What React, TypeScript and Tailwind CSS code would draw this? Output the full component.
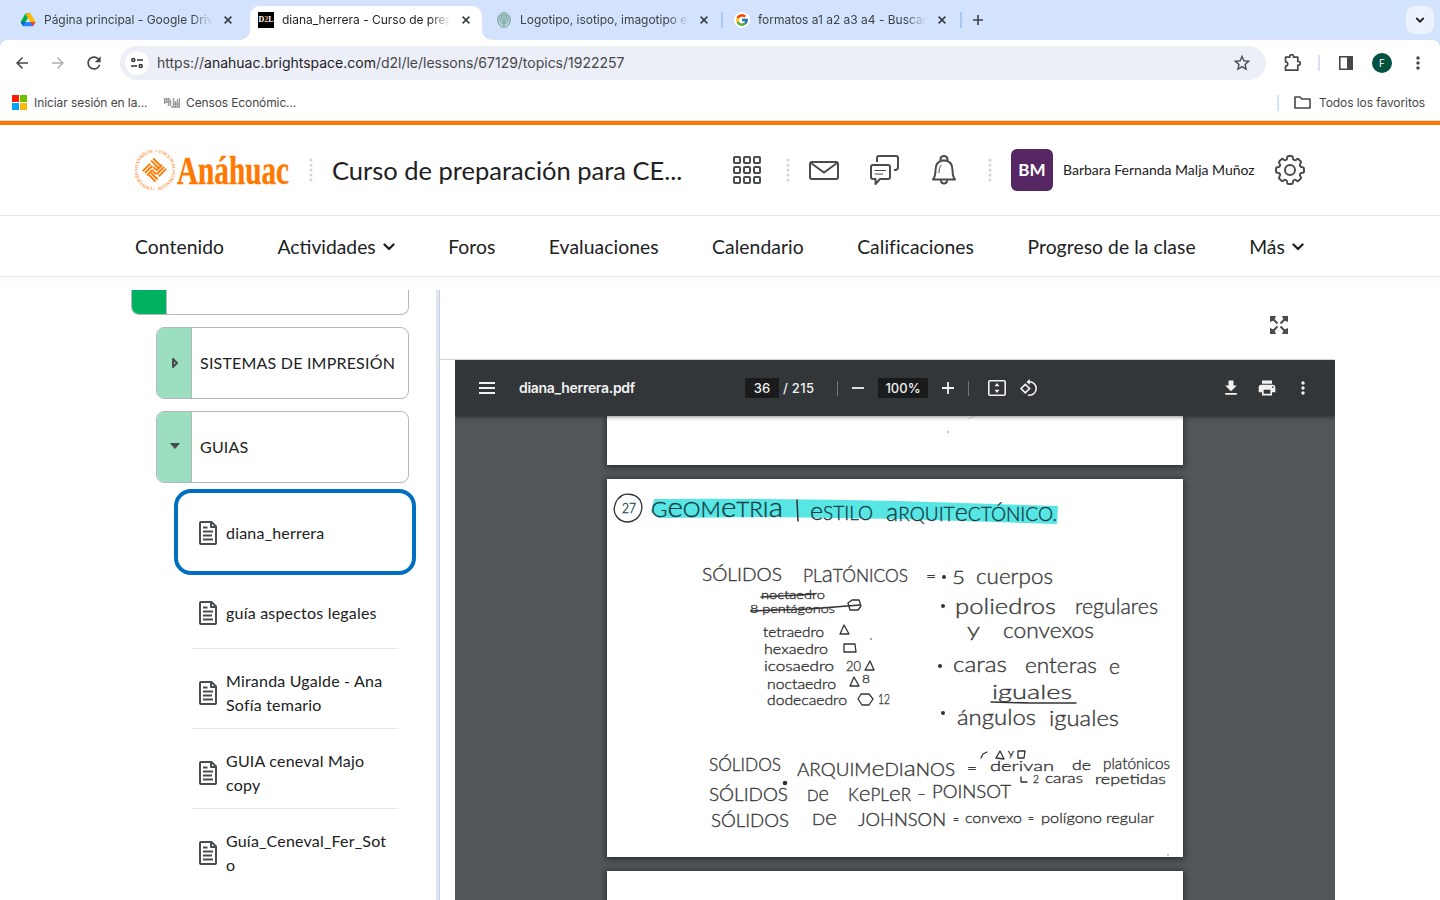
import React from "react";
import { FcGoogle } from "react-icons/fc";
import {
  MdArrowBack,
  MdArrowForward,
  MdRefresh,
  MdStarBorder,
  MdMoreVert,
  MdDownload,
  MdPrint,
} from "react-icons/md";

const Close = () => (
  <svg className="h-2 w-2 shrink-0" viewBox="0 0 8 8" stroke="#3c4043" strokeWidth="1.6">
    <path d="M0.6 0.6L7.4 7.4M7.4 0.6L0.6 7.4" />
  </svg>
);

const DriveIcon = () => (
  <svg className="h-4 w-4" viewBox="0 0 16 16">
    <path d="M5.4 1.5h5.2L8 6z" fill="#188038" />
    <path d="M5.4 1.5L8 6 3.2 14.3.6 9.9z" fill="#00ac47" />
    <path d="M10.6 1.5L15.5 9.9h-5.2L8 6 5.4 1.5z" fill="#ffba00" />
    <path d="M5.7 9.9h9.8l-2.6 4.4H3.2z" fill="#2684fc" />
    <path d="M.6 9.9h5.1l-2.5 4.4z" fill="#0066da" />
    <path d="M10.3 9.9h5.2l-2.6 4.4z" fill="#ea4335" />
    <path d="M8 6.200L10.200 9.900H5.800z" fill="#d3e2fd" />
  </svg>
);

const D2LIcon = () => (
  <span className="flex h-4 w-4 items-center justify-center bg-black font-['Liberation_Serif'] text-[8px] font-bold text-white">
    D<span className="text-[#ffb27a]">2</span>L
  </span>
);

const LeafIcon = () => (
  <svg className="h-4 w-4" viewBox="0 0 16 16" fill="none" stroke="#6f9f98" strokeWidth="0.9">
    <ellipse cx="8" cy="8" rx="6.4" ry="7.3" fill="#b9cfd6" />
    <path d="M8 14V3M8 12C5 11 3.5 8 3.4 5M8 10C6 9 5.3 6 5.3 3M8 12c3-1 4.500-4 4.600-7M8 10c2-1 2.700-4 2.700-7M6.500 1.500v3M9.500 1.500v3" />
  </svg>
);

const GoogleIcon = () => (
  <span className="flex h-4 w-4 items-center justify-center rounded-full bg-white">
    <FcGoogle className="h-[14px] w-[14px]" />
  </span>
);

function Tab({ icon, title, active = false }: { icon: React.ReactNode; title: string; active?: boolean }) {
  return (
    <div className={active ? "relative flex h-[34px] w-[232px] items-center rounded-t-[10px] bg-white pb-1.5 pl-2" : "flex h-7 items-center"}>
      {active && (
        <>
          <svg className="absolute -left-2.5 bottom-0 h-2.5 w-2.5" viewBox="0 0 10 10" fill="#fff"><path d="M10 0v10H0A10 10 0 0 0 10 0" /></svg>
          <svg className="absolute -right-2.5 bottom-0 h-2.5 w-2.5" viewBox="0 0 10 10" fill="#fff"><path d="M0 0v10h10A10 10 0 0 1 0 0" /></svg>
        </>
      )}
      <span className="w-4 shrink-0">{icon}</span>
      <span className={`ml-2 w-[168px] overflow-hidden whitespace-nowrap text-[12px] tracking-[-0.02px] [mask-image:linear-gradient(to_right,black_148px,transparent_168px)] ${active ? "text-[#1f1f1f]" : "text-[#3f4346]"}`}>
        {title}
      </span>
      <span className="ml-3"><Close /></span>
    </div>
  );
}

function Browser() {
  return (
    <div className="font-['Inter','Liberation_Sans',sans-serif]">
      <div className="flex h-10 bg-[#d3e2fd] pt-1.5">
        <div className="w-[250px] pl-5"><Tab icon={<DriveIcon />} title="Página principal - Google Drive" /></div>
        <div className="w-[232px]"><Tab active icon={<D2LIcon />} title="diana_herrera - Curso de prepa" /></div>
        <div className="w-[239px] pl-3.5"><Tab icon={<LeafIcon />} title="Logotipo, isotipo, imagotipo e i" /></div>
        <div className="mt-1.5 h-4 w-0.5 bg-[#a8c7fa]" />
        <div className="w-[237px] pl-[11px]"><Tab icon={<GoogleIcon />} title="formatos a1 a2 a3 a4 - Buscar" /></div>
        <div className="mt-1.5 h-4 w-0.5 bg-[#a8c7fa]" />
        <svg className="ml-[11px] mt-[9px] h-2.5 w-2.5" viewBox="0 0 10 10" stroke="#3c4043" strokeWidth="1.6"><path d="M5 0v10M0 5h10" /></svg>
        <div className="ml-auto mr-1.5 flex h-7 w-7 items-center justify-center rounded-[9px] bg-[#ecf3fe]">
          <svg className="h-2 w-2.5" viewBox="0 0 10 8" fill="none" stroke="#1f1f1f" strokeWidth="1.8"><path d="M1.300 2L5 5.700 8.700 2" /></svg>
        </div>
      </div>
      <div className="bg-[#d3e2fd]">
        <div className="flex h-[46px] items-center rounded-t-[8px] bg-white text-[#474747]">
          <MdArrowBack className="ml-[13px] h-[18px] w-[18px]" />
          <MdArrowForward className="ml-[18px] h-[18px] w-[18px] text-[#aeb0b3]" />
          <MdRefresh className="ml-[17px] h-5 w-5" />
          <div className="ml-[16px] flex h-[34px] w-[1146px] items-center rounded-full bg-[#eceef8]">
            <span className="ml-[5px] flex h-6 w-6 items-center justify-center rounded-full bg-white">
              <svg className="h-3 w-3" viewBox="0 0 12 12" fill="none" stroke="#333" strokeWidth="1.5"><circle cx="2.300" cy="3" r="1.500" /><path d="M6 3h6M0 9h6" /><circle cx="9.700" cy="9" r="1.500" /></svg>
            </span>
            <span className="ml-2 pb-px text-[14px] tracking-[-0.01px] text-[#474747]">
              https://<span className="text-[#1f1f1f]">anahuac.brightspace.com</span>/d2l/le/lessons/67129/topics/1922257
            </span>
            <MdStarBorder className="ml-auto mr-[14px] h-5 w-5" />
          </div>
          <svg className="ml-[18px] h-[18px] w-[18px]" viewBox="0 0 18 18"><path d="M1.500 3.200H5.700V2.500a1.900 1.900 0 0 1 3.800 0v.7h4.300v4.200h.6a1.900 1.900 0 0 1 0 3.800h-.6v5H1.500v-4a2.200 2.200 0 0 0 0-4.400z" fill="none" stroke="#474747" strokeWidth="1.700" strokeLinejoin="round" /></svg>
          <span className="ml-4 h-4 w-0.5 bg-[#d3e2fd]" />
          <svg className="ml-[18px] h-4 w-4" viewBox="0 0 16 16"><path d="M1.800 1.800h12.400v12.400H1.800z" fill="none" stroke="#474747" strokeWidth="1.600" /><path d="M9 2h5.500v12H9z" fill="#474747" /></svg>
          <span className="ml-[18px] flex h-5 w-5 items-center justify-center rounded-full bg-[#00513f] text-[10px] text-white">F</span>
          <MdMoreVert className="ml-4 h-5 w-5" />
        </div>
      </div>
      <div className="flex h-[35px] items-center border-b border-[#dcdcdc] bg-white pb-px text-[12px] text-[#474747]">
        <span className="ml-3 grid h-[15px] w-[15px] grid-cols-2 gap-px">
          <i className="bg-[#ff1c00]" /><i className="bg-[#6fc000]" /><i className="bg-[#00a5f5]" /><i className="bg-[#ffba08]" />
        </span>
        <span className="ml-[7px] w-[114px] whitespace-nowrap tracking-[-0.08px]">Iniciar sesión en la...</span>
        <svg className="ml-4 h-3 w-4" viewBox="0 0 16 12" fill="none" stroke="#9a9a9a" strokeWidth="1.400"><path d="M.5 1v6M2.500 1v5M4.500 1v8M6.500 3v6M9.500 1v9M11.500 4v7M13.500 2v8M15.500 1v10" /><path d="M0 2h6M1 5h5M7 10h9M9 7h6" /></svg>
        <span className="ml-1.5 tracking-[-0.12px]">Censos Económic...</span>
        <span className="ml-auto h-4 w-0.5 bg-[#d3e2fd]" />
        <svg className="ml-[15px] h-[13px] w-[17px]" viewBox="0 0 17 13" fill="none" stroke="#474747" strokeWidth="1.600" strokeLinejoin="round"><path d="M1 1h5l2 2h8v9H1z" /></svg>
        <span className="ml-2 w-[106px] whitespace-nowrap tracking-[-0.08px]">Todos los favoritos</span>
        <span className="w-[15px]" />
      </div>
    </div>
  );
}

const Dots = () => (
  <svg className="h-6 w-1 shrink-0" viewBox="0 0 4 24" fill="#cdd5e3">
    {[2, 7, 12, 17, 22].map((y) => <circle key={y} cx="2" cy={y} r="1.500" />)}
  </svg>
);

const Emblem = () => (
  <svg className="h-10 w-[40px]" viewBox="0 0 40 40" fill="none" stroke="#ff7900">
    <defs><path id="ring" d="M20 37.500a17.500 17.500 0 1 1 .1 0" /></defs>
    <text fill="#ff7900" stroke="none" fontSize="5" fontFamily="Liberation Serif">
      <textPath href="#ring" textLength="107">• UNIVERSIDAD ANÁHUAC • VINCE IN BONO MALUM</textPath>
    </text>
    <g transform="rotate(-45 19.500 20)" strokeWidth="1.900">
      <path d="M10.500 12.500H21M10.500 15.500H21M10.500 18.500H18.500" />
      <path d="M26.800 11v10.500M23.800 11v10.500M20.800 17v4.500" />
      <path d="M28.500 27.500H18M28.500 24.500H18M28.500 21.800H20.500" />
      <path d="M12 29V19.500M15 29V19.500M17.600 24V19.500" />
    </g>
  </svg>
);

const Caret = () => (
  <svg className="ml-[7px] h-2 w-3" viewBox="0 0 12 8" fill="none" stroke="#202122" strokeWidth="2.300" strokeLinecap="round" strokeLinejoin="round"><path d="M1.500 1.500L6 6l4.500-4.500" /></svg>
);

function Header() {
  return (
    <header className="border-t-4 border-[#ff7900] bg-white text-[#202122]">
      <div className="flex h-[91px] items-center border-b border-[#e6e6e6] pl-[135px]">
        <Emblem />
        <svg className="ml-0.5 h-10 w-[114px]" viewBox="0 0 114 40">
          <text x="0" y="34" fontFamily="Liberation Serif" fontWeight="bold" fontSize="39" fill="#ff7900" stroke="#ff7900" strokeWidth="0.400" textLength="112" lengthAdjust="spacingAndGlyphs">Anáhuac</text>
        </svg>
        <span className="ml-[18px] flex"><Dots /></span>
        <h1 className="ml-[19px] w-[359px] whitespace-nowrap pt-px text-[25.5px]">Curso de preparación para CE...</h1>
        <svg className="ml-[42px] h-7 w-7" viewBox="0 0 28 28" fill="none" stroke="#494c4e" strokeWidth="2">
          {[1, 11, 21].map((x) => [1, 11, 21].map((y) => <rect key={`${x}-${y}`} x={x} y={y} width="6" height="6" rx="1" />))}
        </svg>
        <span className="ml-[25px] flex"><Dots /></span>
        <svg className="ml-[19px] h-[19px] w-[30px]" viewBox="0 0 30 19" fill="none" stroke="#494c4e" strokeWidth="2"><rect x="1" y="1" width="28" height="17" rx="2" /><path d="M2 2l13 9.500L28 2" /></svg>
        <svg className="ml-[30px] h-[30px] w-[30px]" viewBox="0 0 30 30" fill="none" stroke="#494c4e" strokeWidth="2" strokeLinejoin="round">
          <path d="M8 7V3a2 2 0 0 1 2-2h14l3 0a2 2 0 0 1 2 2v9a3 3 0 0 1-3 3h-1" />
          <path d="M3 10h16a2 2 0 0 1 2 2v10a2 2 0 0 1-2 2h-8l-4.500 5V24H4a2 2 0 0 1-2-2V12a2 2 0 0 1 2-2" />
          <path d="M5.500 15.500H17M5.500 19H14" strokeWidth="1.200" />
        </svg>
        <svg className="ml-[30px] h-[30px] w-[30px]" viewBox="0 0 30 30" fill="none" stroke="#494c4e" strokeWidth="2" strokeLinejoin="round">
          <path d="M11.500 6V4a3.500 3 0 0 1 7 0V6M11 5.500h8M6.500 15c0-6 3-9.500 8.500-9.500s8.500 3.500 8.500 9.500c0 5 .5 7 2.500 9.500H4C6 22 6.500 20 6.500 15zM12 25.500c0 4 6 4 6 0" />
          <path d="M12.500 10c-2 1.500-2.500 5-2.500 8" strokeWidth="1" />
        </svg>
        <span className="ml-[29px] flex"><Dots /></span>
        <span className="ml-[19px] flex h-[42px] w-[42px] items-center justify-center rounded-md bg-[#572764] text-[17px] font-bold text-white">BM</span>
        <span className="ml-2.5 w-[193px] whitespace-nowrap pb-px text-[14px]">Barbara Fernanda Malja Muñoz</span>
        <svg className="ml-[19px] h-[30px] w-[30px]" viewBox="0 0 30 30" fill="none" stroke="#494c4e" strokeWidth="2" strokeLinejoin="round">
          <circle cx="15" cy="15" r="5" />
          <path d="M12.200 2.500a1.500 1.500 0 0 1 1.500-1.500h2.600a1.500 1.500 0 0 1 1.500 1.500c0 2.500 2 3.400 3.800 1.900a1.500 1.500 0 0 1 2.100 0l1.900 1.900a1.500 1.500 0 0 1 0 2.100c-1.500 1.800-.6 3.800 1.900 3.800A1.500 1.500 0 0 1 29 13.700v2.600a1.500 1.500 0 0 1-1.500 1.500c-2.500 0-3.400 2-1.900 3.800a1.500 1.500 0 0 1 0 2.100l-1.900 1.900a1.500 1.500 0 0 1-2.100 0c-1.800-1.500-3.800-.6-3.800 1.900A1.500 1.500 0 0 1 16.300 29h-2.600a1.500 1.500 0 0 1-1.500-1.500c0-2.500-2-3.400-3.800-1.900a1.500 1.500 0 0 1-2.100 0l-1.900-1.900a1.500 1.500 0 0 1 0-2.100c1.500-1.800.6-3.800-1.900-3.800A1.500 1.500 0 0 1 1 16.300v-2.600a1.500 1.500 0 0 1 1.500-1.500c2.500 0 3.400-2 1.900-3.800a1.500 1.500 0 0 1 0-2.100l1.900-1.900a1.500 1.500 0 0 1 2.100 0c1.800 1.500 3.800.6 3.800-1.900z" />
        </svg>
      </div>
      <nav className="flex h-[61px] items-center justify-between border-b border-[#e6e6e6] pl-[135px] pr-[136px] pt-[2px] text-[19.3px] tracking-[0.07px]">
        <span>Contenido</span>
        <span className="flex items-center tracking-normal">Actividades<Caret /></span>
        <span>Foros</span>
        <span>Evaluaciones</span>
        <span>Calendario</span>
        <span>Calificaciones</span>
        <span>Progreso de la clase</span>
        <span className="flex items-center">Más<Caret /></span>
      </nav>
      <div className="h-1 bg-[#fbfbfb]" />
    </header>
  );
}

const DocIcon = () => (
  <svg className="h-6 w-[18px] shrink-0" viewBox="0 0 18 24" fill="none" stroke="#494c4e" strokeWidth="2" strokeLinejoin="round">
    <path d="M1 2a1 1 0 0 1 1-1h10.500L17 5.500V22a1 1 0 0 1-1 1H2a1 1 0 0 1-1-1zM12 1v5h5M4 6.500h4.500M4 10.500h10M4 14.500h9M4 18.500h10" />
  </svg>
);

function Unit({ label, open }: { label: string; open: boolean }) {
  return (
    <div className="ml-[25px] mt-3 flex h-[72px] w-[253px] overflow-hidden rounded-lg border border-[#b1b9be]">
      <div className="flex w-[35px] shrink-0 items-center justify-center border-r border-[#b1b9be] bg-[#9bdfc0]">
        {open ? (
          <svg className="mb-0.5 ml-0.5 h-1.5 w-2.5" viewBox="0 0 10 6"><path d="M.7.5h8.600L5 5.500z" fill="#494c4e" stroke="#494c4e" strokeLinejoin="round" /></svg>
        ) : (
          <svg className="mr-[-1px] h-2.5 w-1.5" viewBox="0 0 6 10"><path d="M1 1v8l4-4z" fill="none" stroke="#494c4e" strokeWidth="2" strokeLinejoin="round" /></svg>
        )}
      </div>
      <span className="flex items-center whitespace-nowrap pl-2 text-[16px] tracking-[0.2px]">{label}</span>
    </div>
  );
}

function Sidebar() {
  return (
    <aside className="h-[610px] w-[305px] shrink-0 overflow-hidden text-[#202122]">
      <div className="flex h-[25px] w-[278px] overflow-hidden rounded-b-lg border border-t-0 border-[#b1b9be]">
        <div className="w-[35px] border-r border-[#b1b9be] bg-[#00b160]" />
      </div>
      <Unit label="SISTEMAS DE IMPRESIÓN" open={false} />
      <Unit label="GUIAS" open />
      <div className="ml-[43px] mt-1.5 flex h-[86px] w-[242px] items-center rounded-[17px] border-4 border-[#006fbf] pl-[21px] pt-0.5">
        <DocIcon /><span className="ml-[9px] text-[16px] leading-6 tracking-[0.2px]">diana_herrera</span>
      </div>
      <div className="ml-[61px] mr-[38px]">
        {[
          ["guía aspectos legales"],
          ["Miranda Ugalde - Ana", "Sofía temario"],
          ["GUIA ceneval Majo", "copy"],
          ["Guía_Ceneval_Fer_Sot", "o"],
        ].map((lines, i) => (
          <div key={lines[0]} className={`flex items-center pl-[7px] ${i === 0 ? "h-[74px] border-b border-[#e3e9f1] pt-[3px]" : i === 3 ? "h-[79px] pt-2" : "h-20 border-b border-[#e3e9f1] pt-2"}`}>
            <DocIcon />
            <span className="ml-[9px] whitespace-nowrap text-[16px] leading-6 tracking-[0.2px]">
              {lines.map((l) => <span key={l} className="block">{l}</span>)}
            </span>
          </div>
        ))}
      </div>
    </aside>
  );
}

type Word = [string, number, number, number, number];

const words: Word[] = [
  ["27", 622, 513, 14, 13],
  ["GeOMeTRIa", 651, 517, 132, 21],
  ["eSTILO", 810, 520, 63, 20],
  ["aRQUITeCTÓNICO.", 886, 521, 171, 20],
  ["SÓLIDOS", 702, 581, 80, 18],
  ["PLaTÓNICOS", 803, 582, 105, 18],
  ["=", 926, 582, 10, 16],
  ["5", 952, 584, 13, 18],
  ["cuerpos", 976, 584, 77, 22],
  ["noctaedro", 761, 599, 64, 12],
  ["8 pentágonos", 750, 613, 85, 12],
  ["tetraedro", 763, 637, 61, 13],
  ["hexaedro", 764, 654, 64, 13],
  ["icosaedro", 764, 671, 70, 13],
  ["20", 846, 671, 15, 13],
  ["noctaedro", 767, 689, 69, 13],
  ["8", 862, 683, 8, 12],
  ["dodecaedro", 767, 705, 80, 13],
  ["12", 878, 704, 12, 13],
  ["poliedros", 955, 614, 101, 21],
  ["regulares", 1075, 614, 83, 21],
  ["y", 967, 637, 13, 20],
  ["convexos", 1003, 638, 91, 21],
  ["caras", 953, 672, 54, 21],
  ["enteras", 1025, 673, 72, 21],
  ["e", 1109, 674, 11, 21],
  ["iguales", 992, 699, 80, 20],
  ["ángulos", 957, 725, 79, 21],
  ["iguales", 1049, 726, 70, 21],
  ["SÓLIDOS", 709, 771, 72, 17],
  ["ARQUIMeDIaNOS", 797, 776, 158, 17],
  ["=", 967, 774, 10, 15],
  ["y", 1008, 756, 6, 9],
  ["derivan", 990, 771, 64, 14],
  ["de", 1072, 770, 19, 14],
  ["platónicos", 1103, 769, 67, 15],
  ["2", 1033, 783, 6, 11],
  ["caras", 1045, 783, 38, 13],
  ["repetidas", 1095, 784, 71, 13],
  ["SÓLIDOS", 709, 801, 79, 17],
  ["De", 807, 801, 22, 16],
  ["KePLeR", 848, 801, 63, 17],
  ["-", 917, 800, 9, 17],
  ["POINSOT", 932, 798, 79, 17],
  ["SÓLIDOS", 711, 827, 78, 17],
  ["De", 812, 825, 25, 16],
  ["JOHNSON", 858, 826, 88, 17],
  ["=", 953, 824, 6, 12],
  ["convexo", 965, 823, 57, 14],
  ["=", 1028, 823, 6, 12],
  ["polígono", 1041, 823, 61, 14],
  ["regular", 1106, 823, 48, 14],
];

const isCaps = (s: string) => s.length > 1 && /[A-Z]/.test(s);

function Notes() {
  return (
    <svg className="h-[378px] w-[576px]" viewBox="607 479 576 378" fill="none" stroke="#333" strokeWidth="1.300" strokeLinejoin="round" strokeLinecap="round">
      <path d="M654 499Q780 498 900 501L1058 506 1057 524 900 519 770 517 659 518 651 512z" fill="#57e6e4" stroke="none" />
      <path d="M618 499c5-7 17-6 22 1 5 10-1 21-12 22-10 0-16-9-13-17 1-4 3-7 6-8" />
      <path d="M797 500l1 21M761 597l54-3M751 611l58-2 51-4M991 702l40 1 45 0" strokeWidth="1.500" />
      <path d="M848 603l4-3h7l2 6-3 4h-8zM844 625l5 9h-9zM844 644h11l1 8h-12zM870 661l4 9h-9zM854 677l5 9h-9zM861 694h8l4 5-4 6h-7l-4-6zM1000 751l4 8-8-1zM1018 751h7l-1 7h-6zM981 758l2-4 4-2M1021 777v5h6" />
      <g fill="#333" stroke="none">
        <circle cx="944" cy="577" r="2" /><circle cx="943" cy="606" r="2" /><circle cx="940" cy="666" r="2" /><circle cx="943" cy="713" r="2" /><circle cx="785" cy="783" r="2.300" /><circle cx="871" cy="639" r=".8" /><circle cx="1168" cy="855" r="1" fill="#bbb" />
        {words.map(([t, x, y, w, s], i) => (
          <text key={i} x={x} y={y} fontSize={s} textLength={w} lengthAdjust="spacingAndGlyphs" className="font-['Lato',sans-serif]" fontWeight={300} stroke={y < 530 ? "#153c44" : "#3a3a3a"} strokeWidth={0.35} fill={y < 530 ? "#153c44" : "#3a3a3a"}>
            {isCaps(t)
              ? t.split("").map((c, j) => <tspan key={j} fontSize={/[a-z]/.test(c) ? s * 1.32 : s}>{c}</tspan>)
              : t}
          </text>
        ))}
      </g>
    </svg>
  );
}

function PdfViewer() {
  return (
    <section className="ml-[15px] h-[540px] w-[880px] overflow-hidden bg-[#525659]">
      <div className="relative flex h-14 items-center bg-[#323639] font-['Inter','Liberation_Sans',sans-serif] text-[13px] font-medium text-[#f1f1f1] shadow-[0_1px_4px_rgba(0,0,0,0.45)]">
        <svg className="ml-6 h-3 w-4" viewBox="0 0 16 12" stroke="#f1f1f1" strokeWidth="2"><path d="M0 1h16M0 6h16M0 11h16" /></svg>
        <span className="ml-6 w-[226px] pb-px text-[14px] font-semibold tracking-[-0.3px]">diana_herrera.pdf</span>
        <span className="flex h-5 w-[34px] items-center justify-center bg-[#191b1c] pt-px">36</span>
        <span className="ml-1 w-[54px] whitespace-nowrap pt-px tracking-[0.3px]">/ 215</span>
        <span className="h-[15px] w-px bg-[#70777b]" />
        <svg className="ml-3.5 h-3 w-3" viewBox="0 0 12 12" stroke="#f1f1f1" strokeWidth="1.800"><path d="M0 6h12" /></svg>
        <span className="ml-3.5 flex h-5 w-[50px] items-center justify-center bg-[#191b1c] pt-px">100%</span>
        <svg className="ml-3.5 h-3 w-3" viewBox="0 0 12 12" stroke="#f1f1f1" strokeWidth="1.800"><path d="M0 6h12M6 0v12" /></svg>
        <span className="ml-3.5 h-[15px] w-px bg-[#70777b]" />
        <svg className="ml-[19px] h-4 w-[18px]" viewBox="0 0 18 16" fill="none" stroke="#f1f1f1" strokeWidth="1.600"><rect x=".8" y=".8" width="16.400" height="14.400" rx="1.200" /><path d="M9 3L11.500 6.200H6.500zM9 13L11.500 9.800H6.500z" fill="#f1f1f1" stroke="none" /></svg>
        <svg className="ml-[14px] h-[18px] w-[18px]" viewBox="0 0 18 18" fill="none" stroke="#f1f1f1" strokeWidth="1.600"><path d="M5.300 5.300L9.600 9.600 5.300 13.900 1 9.600zM8 2.800h1.500a6.700 6.700 0 1 1 0 13.400H8" /><path d="M9.800 0v5.800L6.500 2.900z" fill="#f1f1f1" stroke="none" /></svg>
        <MdDownload className="ml-auto h-5 w-5" />
        <MdPrint className="ml-4 h-5 w-5" />
        <MdMoreVert className="ml-4 mr-[22px] h-5 w-5" />
      </div>
      <div className="flex flex-col items-center gap-3.5">
        <div className="h-[49px] w-[576px] bg-white shadow-[0_1px_6px_1px_rgba(0,0,0,0.5)]">
          <svg className="h-[49px] w-[576px]" viewBox="607 416 576 49"><circle cx="948" cy="432" r="1.200" fill="#ccc" /><path d="M968 419l7-3" stroke="#ddd" /></svg>
        </div>
        <div className="h-[378px] w-[576px] bg-white shadow-[0_1px_6px_1px_rgba(0,0,0,0.5)]"><Notes /></div>
        <div className="h-[43px] w-[576px] bg-white shadow-[0_1px_6px_1px_rgba(0,0,0,0.5)]" />
      </div>
    </section>
  );
}

export default function App() {
  return (
    <div className="flex h-[900px] w-[1440px] flex-col overflow-hidden bg-white font-['Lato','Liberation_Sans',sans-serif]">
      <Browser />
      <Header />
      <main className="mt-[9px] flex h-[610px] pl-[131px]">
        <Sidebar />
        <div className="w-1 shrink-0 border-r border-[#c9d2de] bg-[#dfe6f2]" />
        <div className="w-[895px]">
          <div className="flex h-[70px] items-center justify-end border-b border-[#cdd5dc] pr-[47px]">
            <svg className="h-[18px] w-[18px]" viewBox="0 0 18 18" fill="#494c4e" stroke="#494c4e" strokeWidth="2">
              <path d="M3 3l4.500 4.500M15 3l-4.500 4.500M3 15l4.500-4.500M15 15l-4.500-4.500" />
              <path d="M0 0h6L4.500 3.500 3.500 4.500 0 6zM18 0h-6l1.500 3.500 1 1L18 6zM0 18h6l-1.500-3.500-1-1L0 12zM18 18h-6l1.500-3.500 1-1L18 12z" stroke="none" />
            </svg>
          </div>
          <PdfViewer />
        </div>
      </main>
    </div>
  );
}
